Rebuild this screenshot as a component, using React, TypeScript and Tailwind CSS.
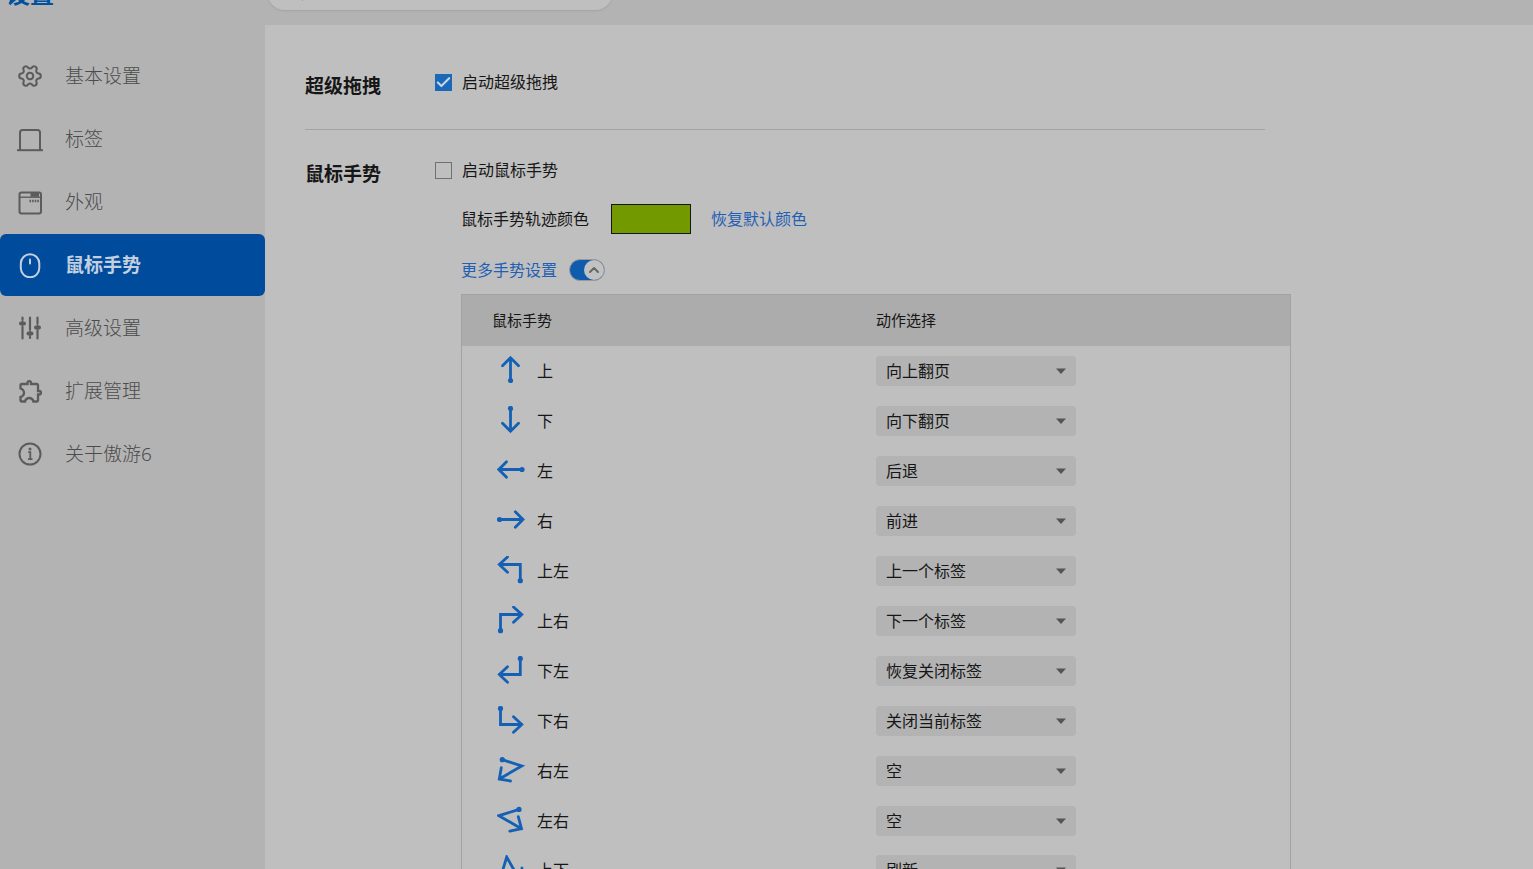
import React, { useState } from 'react';
import { Check, ChevronUp, Search, Settings } from 'lucide-react';
import { MdOutlineExtension } from 'react-icons/md';

interface NavItem {
  id: string;
  label: string;
  icon: React.ReactNode;
}

interface Gesture {
  name: string;
  action: string;
  dot: [number, number];
  path: string;
}

const TabIcon = () => (
  <svg className="w-[26px] h-[26px] shrink-0" viewBox="0 0 26 26" fill="none" stroke="currentColor" strokeWidth="2">
    <path d="M3 24V6.500A2.500 2.500 0 0 1 5.500 4H20.500A2.500 2.500 0 0 1 23 6.500V24" />
    <path d="M0 24.200H26" />
  </svg>
);

const WindowIcon = () => (
  <svg className="w-[26px] h-[26px] shrink-0" viewBox="0 0 26 26" fill="none" stroke="currentColor" strokeWidth="2">
    <rect x="2.500" y="3.500" width="21.500" height="21" rx="2" />
    <path d="M2.500 8.200H24" strokeWidth="1.400" />
    <path d="M13.500 5.800H22" strokeWidth="4" />
    <path d="M12.500 12H22.500" strokeWidth="2.600" strokeDasharray="1.600 1" />
  </svg>
);

const MouseIcon = () => (
  <svg className="w-[26px] h-[26px] shrink-0" viewBox="0 0 26 26" fill="none" stroke="currentColor" strokeWidth="2">
    <rect x="3.800" y="2.300" width="18.500" height="23" rx="9.200" />
    <path d="M13 7.500V11.500" strokeLinecap="round" />
  </svg>
);

const SlidersIcon = () => (
  <svg className="w-[26px] h-[26px] shrink-0" viewBox="0 0 26 26" fill="none" stroke="currentColor" strokeWidth="2.2" strokeLinecap="round">
    <path d="M5.500 2.500V4M5.500 12.500V23.500M13 2.500V14M13 22V23M20.500 2.500V8M20.500 16V23.500" />
    <path d="M4 8.500H7M11.500 18.500H14.500M19 12.500H22" strokeWidth="4" />
    <path d="M5.500 4V12.500M13 14V22M20.500 8V16" strokeWidth="1.600" />
  </svg>
);

const InfoIcon = () => (
  <svg className="w-[26px] h-[26px] shrink-0" viewBox="0 0 26 26" fill="none" stroke="currentColor" strokeWidth="2">
    <circle cx="13" cy="13" r="10.500" />
    <path d="M11.200 11.200H13.300V18M11 18.200H15.500" strokeWidth="1.800" />
    <circle cx="13" cy="8" r="1.500" fill="currentColor" stroke="none" />
  </svg>
);

const navItems: NavItem[] = [
  { id: 'basic', label: '基本设置', icon: <Settings className="w-[26px] h-[26px] shrink-0 rotate-30" strokeWidth={1.9} /> },
  { id: 'tabs', label: '标签', icon: <TabIcon /> },
  { id: 'appearance', label: '外观', icon: <WindowIcon /> },
  { id: 'gesture', label: '鼠标手势', icon: <MouseIcon /> },
  { id: 'advanced', label: '高级设置', icon: <SlidersIcon /> },
  { id: 'extensions', label: '扩展管理', icon: <MdOutlineExtension className="w-[28px] h-[28px] shrink-0" /> },
  { id: 'about', label: '关于傲游6', icon: <InfoIcon /> },
];

const gestures: Gesture[] = [
  { name: '上', action: '向上翻页', dot: [13.5, 24.5], path: 'M13.500 24.500V1.800M5.500 9.800L13.500 1.800L21.500 9.800' },
  { name: '下', action: '向下翻页', dot: [13.5, 2.5], path: 'M13.500 2.500V25.200M5.500 17.200L13.500 25.200L21.500 17.200' },
  { name: '左', action: '后退', dot: [25, 13.5], path: 'M25 13.500H1.800M9.500 5.700L1.800 13.500L9.500 21.300' },
  { name: '右', action: '前进', dot: [2.5, 13.5], path: 'M2.500 13.500H26M18.300 5.700L26 13.500L18.300 21.300' },
  { name: '上左', action: '上一个标签', dot: [23.3, 24.7], path: 'M23.300 24.700V8.500H2.300M10.500 1L2.300 8.500L10.500 16.300' },
  { name: '上右', action: '下一个标签', dot: [3.5, 24.7], path: 'M3.500 24.700V8.500H24.800M16.500 1L24.800 8.500L16.500 16.300' },
  { name: '下左', action: '恢复关闭标签', dot: [23.3, 2.5], path: 'M23.300 2.500V18.500H2.300M10.500 10.700L2.300 18.500L10.500 26.300' },
  { name: '下右', action: '关闭当前标签', dot: [3.5, 2.5], path: 'M3.500 2.500V18.500H24.800M16.500 10.700L24.800 18.500L16.500 26.300' },
  { name: '右左', action: '空', dot: [5.3, 3.7], path: 'M5.300 3.700L24.700 10L2.300 23M4.300 11.700L2.300 23L13.500 25' },
  { name: '左右', action: '空', dot: [22, 3.4], path: 'M22 3.400L2 9.700L24.500 22.700M21.300 10.700L24.500 22.700L12.800 25.200' },
  { name: '上下', action: '刷新', dot: [3.7, 22], path: 'M3.700 22L9.700 2L22.700 25M25 13L22.700 25L11.300 22.700' },
];

const actions = ['向上翻页', '向下翻页', '后退', '前进', '上一个标签', '下一个标签', '恢复关闭标签', '关闭当前标签', '空', '刷新'];

const Checkbox: React.FC<{ label: string; defaultChecked?: boolean }> = ({ label, defaultChecked }) => (
  <label className="flex items-center gap-[10px] text-base leading-6 text-[#161616]">
    <span className="relative flex w-[17px] h-[17px]">
      <input
        type="checkbox"
        defaultChecked={defaultChecked}
        className="peer w-full h-full appearance-none border border-[#707070] checked:border-[#1a68b8] checked:bg-[#1a68b8]"
      />
      <Check
        className="absolute inset-0 w-full h-full text-[#c8d4e0] opacity-0 pointer-events-none peer-checked:opacity-100"
        strokeWidth={3}
      />
    </span>
    {label}
  </label>
);

const ActionSelect: React.FC<{ gesture: string; value: string }> = ({ gesture, value }) => (
  <div className="relative w-[200px]">
    <select
      aria-label={`${gesture} 动作选择`}
      defaultValue={value}
      className="block w-full h-[30px] px-[10px] rounded-sm appearance-none bg-[#b3b3b3] text-base leading-6 text-[#161616]"
    >
      {actions.map((action) => (
        <option key={action}>{action}</option>
      ))}
    </select>
    <svg className="absolute right-[10px] top-[12px] w-[10px] h-[6px] pointer-events-none" viewBox="0 0 10 6">
      <path d="M0 0.500H10L5 6Z" fill="#555555" />
    </svg>
  </div>
);

const GestureTable = () => (
  <table className="w-[830px] table-fixed border border-[#a3a3a3] text-left">
    <thead>
      <tr className="h-[51px] bg-[#acacac] text-[15px] leading-6 text-[#161616]">
        <th className="w-1/2 pl-[30px] font-normal">鼠标手势</th>
        <th className="w-1/2 font-normal">动作选择</th>
      </tr>
    </thead>
    <tbody>
      {gestures.map((gesture) => (
        <tr key={gesture.name} className="h-[50px]">
          <td className="pl-[35px]">
            <div className="flex items-center gap-3 text-base leading-6 text-[#161616]">
              <svg
                className="w-[28px] h-[30px]"
                viewBox="0 0 28 30"
                fill="none"
                stroke="#1460b4"
                strokeWidth="2.8"
                strokeLinecap="round"
              >
                <path d={gesture.path} />
                <circle cx={gesture.dot[0]} cy={gesture.dot[1]} r="2.600" fill="#1460b4" stroke="none" />
              </svg>
              {gesture.name}
            </div>
          </td>
          <td>
            <ActionSelect gesture={gesture.name} value={gesture.action} />
          </td>
        </tr>
      ))}
    </tbody>
  </table>
);

export default function App() {
  const [active, setActive] = useState('gesture');
  const [showMore, setShowMore] = useState(true);

  return (
    <div className="flex flex-col h-screen overflow-hidden bg-[#b3b3b3] font-['Noto_Sans','Noto_Sans_CJK_SC',sans-serif]">
      <header className="flex items-end h-[25px] shrink-0 overflow-hidden">
        <h1 className="w-[267px] shrink-0 pl-[6px] pb-[13px] text-2xl leading-9 font-bold text-[#0050a0]">设置</h1>
        <div className="flex items-center gap-2 w-[346px] h-[36px] shrink-0 mb-[15px] pl-[18px] pr-4 rounded-full bg-[#bfbfbf] shadow-[0_1px_2px_#a3a3a3]">
          <Search className="w-5 h-5 text-[#666666]" />
          <input type="text" aria-label="搜索设置" className="flex-1 min-w-0 outline-none" />
        </div>
      </header>

      <div className="flex flex-1 min-h-0">
        <nav className="flex flex-col gap-px w-[265px] shrink-0 pt-5">
          {navItems.map((item) => (
            <button
              key={item.id}
              onClick={() => setActive(item.id)}
              className={`flex items-center h-[62px] shrink-0 pl-[17px] rounded-md text-[19px] leading-7 ${
                active === item.id ? 'bg-[#004b9b] text-[#c3d0e0] font-bold' : 'text-[#4c4c4c] font-light'
              }`}
            >
              <span className={`flex w-12 shrink-0 ${active === item.id ? '' : 'text-[#5c5c5c]'}`}>{item.icon}</span>
              {item.label}
            </button>
          ))}
        </nav>

        <main className="flex-1 min-w-0 overflow-hidden pl-10 bg-[#bfbfbf]">
          <section className="flex items-start max-w-[960px] pt-[45px] pb-[29px] border-b border-[#a3a3a3]">
            <h2 className="w-[130px] shrink-0 pt-0.5 text-[19px] leading-7 font-bold text-[#161616]">超级拖拽</h2>
            <Checkbox label="启动超级拖拽" defaultChecked />
          </section>

          <section className="flex items-start pt-[28px]">
            <h2 className="w-[130px] shrink-0 pt-0.5 text-[19px] leading-7 font-bold text-[#161616]">鼠标手势</h2>
            <div>
              <Checkbox label="启动鼠标手势" />
              <div className="pl-[26px]">
                <div className="flex items-center gap-5 mt-[22px] text-base leading-6 text-[#161616]">
                  <span className="w-[130px]">鼠标手势轨迹颜色</span>
                  <button aria-label="鼠标手势轨迹颜色" className="w-[80px] h-[30px] border border-[#161616] bg-[#739900]" />
                  <a href="#reset" className="text-[#1f60b4]">
                    恢复默认颜色
                  </a>
                </div>
                <div className="flex items-center gap-[10px] mt-6 mb-3 text-base leading-6 text-[#1f60b4]">
                  <span className="w-[98px]">更多手势设置</span>
                  <button
                    role="switch"
                    aria-checked={showMore}
                    aria-label="更多手势设置"
                    onClick={() => setShowMore(!showMore)}
                    className="flex justify-end w-[36px] h-[22px] rounded-full border border-[#999999] bg-[#0f5cac]"
                  >
                    <span className="flex items-center justify-center w-5 h-5 rounded-full bg-[#c2c2c2]">
                      <ChevronUp className="w-4 h-4 text-[#666666]" strokeWidth={3} />
                    </span>
                  </button>
                </div>
                {showMore && <GestureTable />}
              </div>
            </div>
          </section>
        </main>
      </div>
    </div>
  );
}
